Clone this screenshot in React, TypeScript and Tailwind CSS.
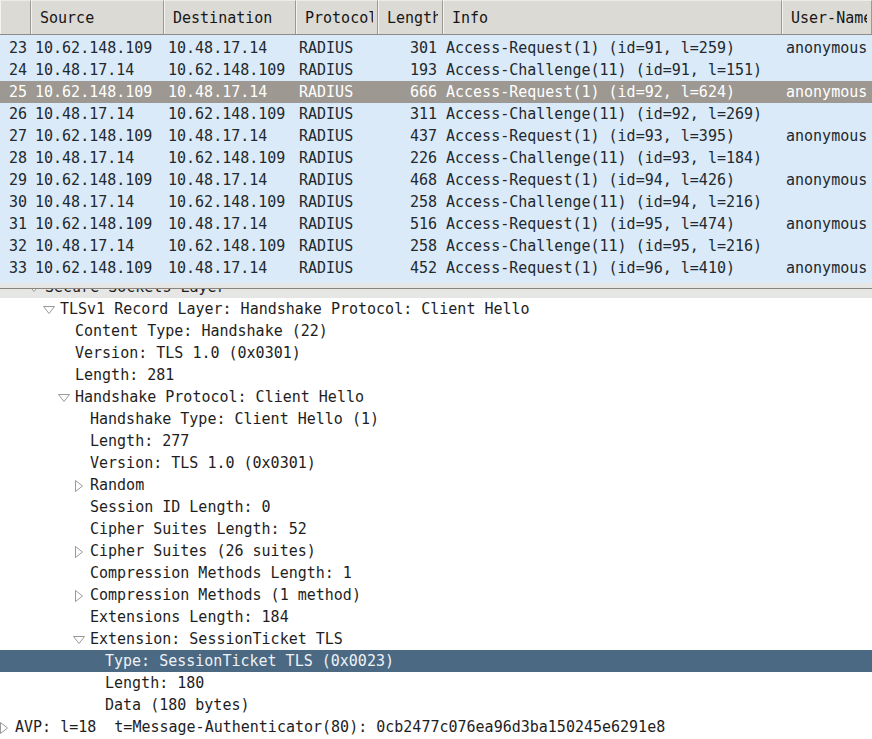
import React from "react";

const packets = [
  ["23", "10.62.148.109", "10.48.17.14", "RADIUS", "301", "Access-Request(1) (id=91, l=259)", "anonymous"],
  ["24", "10.48.17.14", "10.62.148.109", "RADIUS", "193", "Access-Challenge(11) (id=91, l=151)", ""],
  ["25", "10.62.148.109", "10.48.17.14", "RADIUS", "666", "Access-Request(1) (id=92, l=624)", "anonymous"],
  ["26", "10.48.17.14", "10.62.148.109", "RADIUS", "311", "Access-Challenge(11) (id=92, l=269)", ""],
  ["27", "10.62.148.109", "10.48.17.14", "RADIUS", "437", "Access-Request(1) (id=93, l=395)", "anonymous"],
  ["28", "10.48.17.14", "10.62.148.109", "RADIUS", "226", "Access-Challenge(11) (id=93, l=184)", ""],
  ["29", "10.62.148.109", "10.48.17.14", "RADIUS", "468", "Access-Request(1) (id=94, l=426)", "anonymous"],
  ["30", "10.48.17.14", "10.62.148.109", "RADIUS", "258", "Access-Challenge(11) (id=94, l=216)", ""],
  ["31", "10.62.148.109", "10.48.17.14", "RADIUS", "516", "Access-Request(1) (id=95, l=474)", "anonymous"],
  ["32", "10.48.17.14", "10.62.148.109", "RADIUS", "258", "Access-Challenge(11) (id=95, l=216)", ""],
  ["33", "10.62.148.109", "10.48.17.14", "RADIUS", "452", "Access-Request(1) (id=96, l=410)", "anonymous"],
];

type Node = { t: string; pl: string; a?: "down" | "right"; sel?: boolean; gray?: boolean };

const tree: Node[] = [
  { t: "Secure Sockets Layer", pl: "pl-[45px]", a: "down", gray: true },
  { t: "TLSv1 Record Layer: Handshake Protocol: Client Hello", pl: "pl-[60px]", a: "down" },
  { t: "Content Type: Handshake (22)", pl: "pl-[75px]" },
  { t: "Version: TLS 1.0 (0x0301)", pl: "pl-[75px]" },
  { t: "Length: 281", pl: "pl-[75px]" },
  { t: "Handshake Protocol: Client Hello", pl: "pl-[75px]", a: "down" },
  { t: "Handshake Type: Client Hello (1)", pl: "pl-[90px]" },
  { t: "Length: 277", pl: "pl-[90px]" },
  { t: "Version: TLS 1.0 (0x0301)", pl: "pl-[90px]" },
  { t: "Random", pl: "pl-[90px]", a: "right" },
  { t: "Session ID Length: 0", pl: "pl-[90px]" },
  { t: "Cipher Suites Length: 52", pl: "pl-[90px]" },
  { t: "Cipher Suites (26 suites)", pl: "pl-[90px]", a: "right" },
  { t: "Compression Methods Length: 1", pl: "pl-[90px]" },
  { t: "Compression Methods (1 method)", pl: "pl-[90px]", a: "right" },
  { t: "Extensions Length: 184", pl: "pl-[90px]" },
  { t: "Extension: SessionTicket TLS", pl: "pl-[90px]", a: "down" },
  { t: "Type: SessionTicket TLS (0x0023)", pl: "pl-[105px]", sel: true },
  { t: "Length: 180", pl: "pl-[105px]" },
  { t: "Data (180 bytes)", pl: "pl-[105px]" },
  { t: "AVP: l=18  t=Message-Authenticator(80): 0cb2477c076ea96d3ba150245e6291e8", pl: "pl-[15px]", a: "right" },
];

function Arrow({ dir }: { dir: "down" | "right" }) {
  if (dir === "down") {
    return (
      <span className="-ml-[17px] inline-flex h-[22px] w-[17px] items-center pt-[1px]">
        <svg width="12" height="8" viewBox="0 0 12 8">
          <polygon points="0.5,0.5 11.5,0.5 6,7.5" fill="#fdfdfd" stroke="#9a9a9a" strokeWidth="1" />
        </svg>
      </span>
    );
  }
  return (
    <span className="-ml-[17px] inline-flex h-[22px] w-[17px] items-center pl-[2px] pt-[1px]">
      <svg width="8" height="12" viewBox="0 0 8 12">
        <polygon points="0.5,0.5 7.5,6 0.5,11.5" fill="#fdfdfd" stroke="#9a9a9a" strokeWidth="1" />
      </svg>
    </span>
  );
}

const headers = [
  { t: "", w: "w-[31px]" },
  { t: "Source", w: "w-[133px]" },
  { t: "Destination", w: "w-[132px]" },
  { t: "Protocol", w: "w-[82px]" },
  { t: "Length", w: "w-[65px]" },
  { t: "Info", w: "w-[339px]" },
  { t: "User-Name", w: "w-[90px]" },
];

export default function App() {
  const font = { fontFamily: '"DejaVu Sans Mono", "Liberation Mono", monospace' };
  return (
    <div className="h-[739px] w-[872px] overflow-hidden bg-white text-[15px]" style={font}>
      {/* Packet list */}
      <div className="flex h-[283px] flex-col overflow-hidden bg-[#dbeaf9]">
        <div className="flex h-[35px] shrink-0 border-b border-[#8f8b84] bg-[#dcdad5] text-[#161616]">
          {headers.map((h, i) => (
            <div
              key={i}
              className={`${h.w} flex shrink-0 items-center whitespace-nowrap border-r border-l border-t border-r-[#9d9992] border-l-[#f4f3f1] border-t-[#ecebe8] pl-[8px] pr-[4px] pt-[1px]`}
            >
              <div className="h-[22px] w-full overflow-hidden leading-[22px]">{h.t}</div>
            </div>
          ))}
        </div>
        <div className="pt-[2px]">
          {packets.map((p, i) => {
            const sel = p[0] === "25";
            return (
              <div
                key={i}
                className={`flex h-[22px] items-center whitespace-nowrap leading-[22px] ${
                  sel ? "bg-[#9d9891] text-white" : "text-[#22292e]"
                }`}
              >
                <div className="w-[31px] shrink-0 pr-[4px] text-right">{p[0]}</div>
                <div className="w-[133px] shrink-0 pl-[4px]">{p[1]}</div>
                <div className="w-[132px] shrink-0 pl-[4px]">{p[2]}</div>
                <div className="w-[82px] shrink-0 pl-[3px]">{p[3]}</div>
                <div className="w-[65px] shrink-0 pr-[6px] text-right">{p[4]}</div>
                <div className="w-[339px] shrink-0 pl-[3px]">{p[5]}</div>
                <div className="w-[90px] shrink-0 pl-[4px]">{p[6]}</div>
              </div>
            );
          })}
        </div>
      </div>
      {/* pane handle */}
      <div className="h-[5px] bg-[#e6e6e5]" />
      {/* Detail tree */}
      <div className="h-[451px] overflow-hidden border-t border-[#8a857e]">
        <div className="-mt-[13px]">
          {tree.map((n, i) => (
            <div
              key={i}
              className={`flex h-[22px] items-center whitespace-pre leading-[22px] ${n.pl} ${
                n.sel ? "bg-[#4b6983] text-[#eef2f6]" : n.gray ? "bg-[#e6e6e5] text-[#1e1e1e]" : "text-[#1e1e1e]"
              }`}
            >
              {n.a ? <Arrow dir={n.a} /> : null}
              <span>{n.t}</span>
            </div>
          ))}
        </div>
      </div>
    </div>
  );
}
